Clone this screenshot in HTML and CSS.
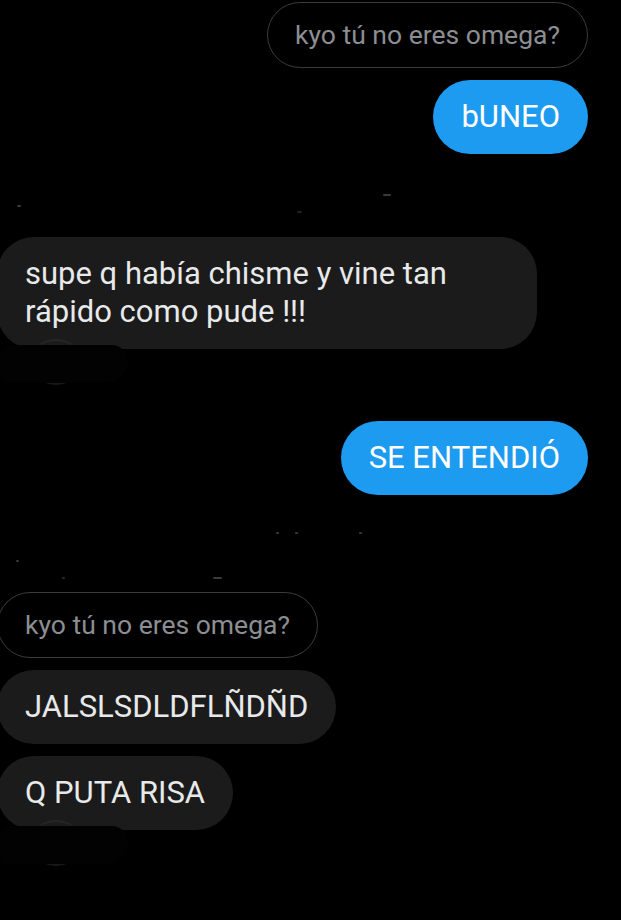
FILE: index.html
```html
<!DOCTYPE html>
<html lang="es">
<head>
  <meta charset="UTF-8" />
  <meta name="viewport" content="width=device-width, initial-scale=1.0"/>
  <title>Mensajes</title>
  <link rel="stylesheet" href="styles.css">
</head>
<body>

  <div class="chat">
    <div class="row sent">
      <div class="quote">kyo tú no eres omega?</div>
    </div>
    <div class="row sent">
      <div class="bubble blue">bUNEO</div>
    </div>

    <!-- header tapado -->
    <div class="redacted redacted-one">
      <span class="speck s1"></span>
      <span class="speck s2"></span>
      <span class="speck s3"></span>
    </div>

    <div class="row received">
      <div class="bubble gray">supe q había chisme y vine tan rápido como pude !!!</div>
    </div>
    <div class="avatar-slot avatar-one">
      <span class="avatar"></span>
      <span class="scribble"></span>
    </div>

    <div class="row sent">
      <div class="bubble blue">SE ENTENDIÓ</div>
    </div>

    <div class="redacted redacted-two">
      <span class="speck s4"></span>
      <span class="speck s5"></span>
      <span class="speck s6"></span>
      <span class="speck s7"></span>
      <span class="speck s8"></span>
      <span class="speck s9"></span>
    </div>

    <div class="row received">
      <div class="quote">kyo tú no eres omega?</div>
    </div>
    <div class="row received">
      <div class="bubble gray">JALSLSDLDFLÑDÑD</div>
    </div>
    <div class="row received">
      <div class="bubble gray">Q PUTA RISA</div>
    </div>
    <div class="avatar-slot avatar-two">
      <span class="avatar"></span>
      <span class="scribble"></span>
    </div>
  </div>

</body>
</html>
```

FILE: styles.css
```css
body {
  background-color: #000;
  font-family: Roboto, 'Noto Sans', sans-serif;
  margin: 0;
  padding: 0;
  overflow: hidden;
}

.chat {
  display: flex;
  flex-direction: column;
  padding: 2px 33px 0 0;
  margin-left: -3px;
}

.row {
  display: flex;
}

.row.sent {
  justify-content: flex-end;
}

.row.received {
  justify-content: flex-start;
}

.row + .row {
  margin-top: 12px;
}

.bubble {
  box-sizing: border-box;
  max-width: 540px;
  font-size: 31px;
  line-height: 38px;
  padding: 18px 28px;
  border-radius: 37px;
  color: #e7e9ea;
}

.bubble.blue {
  background-color: #1d9bf0;
  color: #fff;
}

.bubble.gray {
  background-color: #1b1b1b;
}

.quote {
  font-size: 26.5px;
  line-height: 34px;
  padding: 15px 27px;
  border: 1px solid #3a3b3d;
  border-radius: 33px;
  color: #8b8e92;
}

/* zonas tachadas */
.redacted {
  position: relative;
}

.redacted-one {
  height: 83px;
}

.redacted-two {
  height: 97px;
}

.speck {
  position: absolute;
  height: 2px;
  border-radius: 1px;
  background-color: #3a3a3a;
}

.s1 { left: 20px; top: 51px; width: 4px; }
.s2 { left: 300px; top: 57px; width: 5px; background-color: #222; }
.s3 { left: 386px; top: 40px; width: 8px; }
.s4 { left: 19px; top: 65px; width: 3px; }
.s5 { left: 65px; top: 82px; width: 3px; background-color: #2a2a2a; }
.s6 { left: 216px; top: 82px; width: 9px; }
.s7 { left: 279px; top: 37px; width: 3px; }
.s8 { left: 298px; top: 37px; width: 3px; }
.s9 { left: 362px; top: 37px; width: 3px; }

.avatar-slot {
  position: relative;
  height: 72px;
}

.avatar-two {
  height: 90px;
}

.avatar {
  position: absolute;
  left: 33px;
  top: -10px;
  width: 52px;
  height: 42px;
  border-radius: 50%;
  border-top: 2px solid #262626;
  border-bottom: 2px solid #181818;
}

.scribble {
  position: absolute;
  left: 3px;
  top: -4px;
  width: 128px;
  height: 38px;
  border-radius: 20px 30px 40px 10px;
  background-color: #020202;
}
```
